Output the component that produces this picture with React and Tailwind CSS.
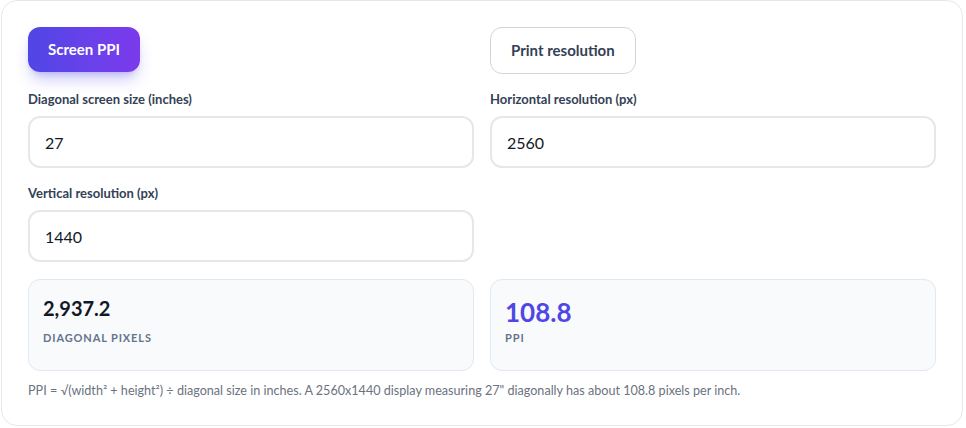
import React, { useState } from 'react';

const Field = ({ label, value, onChange }) => (
  <div className="flex flex-col">
    <label className="mb-2 text-[13px] font-bold leading-[18px] text-[#334155]">{label}</label>
    <input
      type="text"
      value={value}
      onChange={(e) => onChange(e.target.value)}
      className="h-[52px] w-full rounded-xl border-2 border-[#e5e7eb] bg-white pl-[15px] pr-4 text-[16px] text-[#111827] focus:outline-none"
    />
  </div>
);

const App = () => {
  const [mode, setMode] = useState('screen');
  const [diag, setDiag] = useState('27');
  const [w, setW] = useState('2560');
  const [h, setH] = useState('1440');

  const px = Math.sqrt(Number(w) ** 2 + Number(h) ** 2);
  const ppi = px / Number(diag);
  const fmt = (n) => n.toLocaleString('en-US', { minimumFractionDigits: 1, maximumFractionDigits: 1 });

  return (
    <div className="bg-white pl-[1px] pr-[3px] pb-[2px]" style={{ fontFamily: 'Lato, "Noto Sans", sans-serif' }}>
      <div className="rounded-2xl border border-[#e2e8f0] bg-white px-[26px] pt-[26px] pb-[26px]">
        <div className="grid grid-cols-2 gap-x-4 gap-y-4">
          {/* Mode toggle */}
          <div className="flex items-start">
            <button
              onClick={() => setMode('screen')}
              className="h-[45px] rounded-xl bg-linear-to-r from-[#4f46e5] to-[#7c3aed] px-5 text-[15px] font-bold text-white shadow-lg shadow-[#4f46e5]/30"
            >
              Screen PPI
            </button>
          </div>
          <div className="flex items-start">
            <button
              onClick={() => setMode('print')}
              className="h-[47px] rounded-xl border border-[#d1d5db] bg-white px-5 text-[15px] font-bold text-[#334155]"
            >
              Print resolution
            </button>
          </div>

          <Field label="Diagonal screen size (inches)" value={diag} onChange={setDiag} />
          <Field label="Horizontal resolution (px)" value={w} onChange={setW} />
          <Field label="Vertical resolution (px)" value={h} onChange={setH} />
          <div />

          {/* Results */}
          <div className="mt-px h-[92px] rounded-xl border border-[#e2e8f0] bg-[#f8fafc] px-[14px] pt-[14px]">
            <div className="h-[28px] text-[20px] font-bold leading-[28px] text-[#111827]">{fmt(px)}</div>
            <div className="mt-2 text-[11px] font-bold uppercase leading-4 tracking-[0.08em] text-[#64748b]">Diagonal pixels</div>
          </div>
          <div className="mt-px h-[92px] rounded-xl border border-[#e2e8f0] bg-[#f8fafc] px-[14px] pt-[14px]">
            <div className="h-[36px] text-[26px] font-bold leading-[36px] text-[#4f46e5]">{fmt(ppi)}</div>
            <div className="text-[11px] font-bold uppercase leading-4 tracking-[0.08em] text-[#64748b]">PPI</div>
          </div>
        </div>

        <p className="mt-3 text-[12.6px] leading-4 text-[#6b7280]">
          PPI = √(width² + height²) ÷ diagonal size in inches. A 2560x1440 display measuring 27" diagonally has about 108.8 pixels per inch.
        </p>
      </div>
    </div>
  );
};

export default App;
